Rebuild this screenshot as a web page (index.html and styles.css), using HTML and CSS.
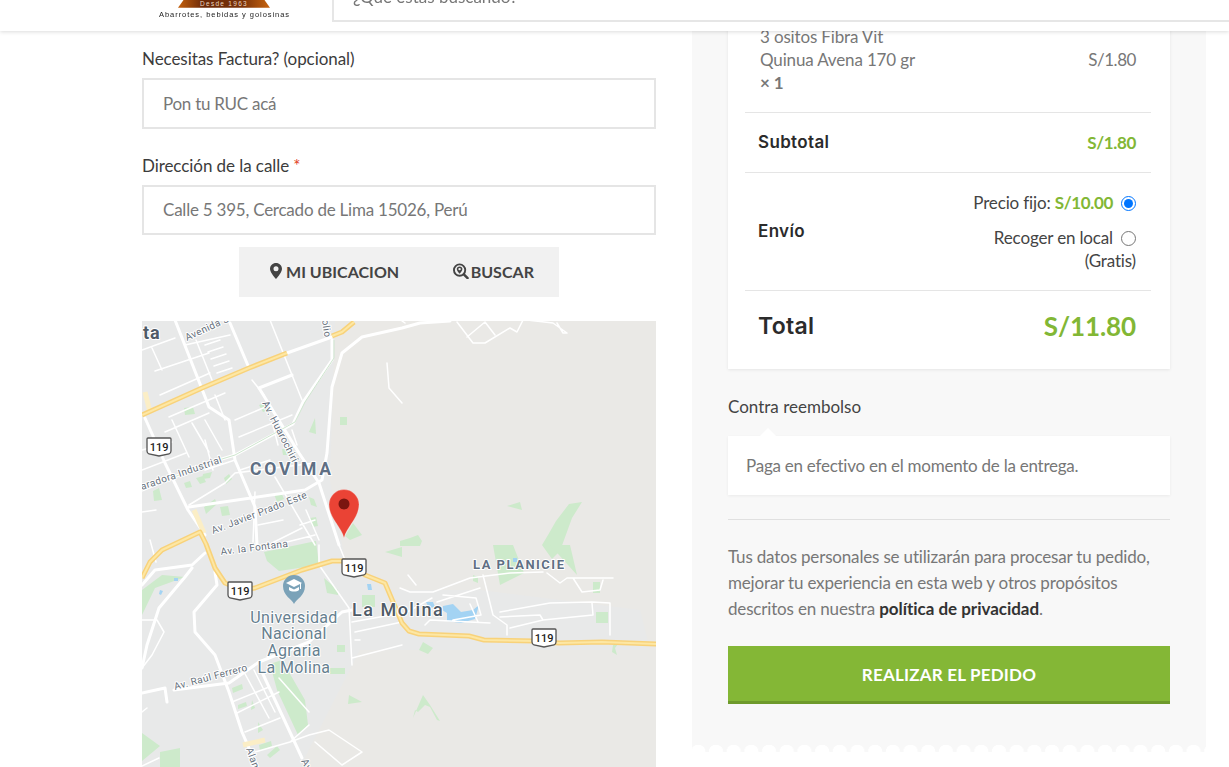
FILE: index.html
```html
<!DOCTYPE html>
<html lang="es">
<head>
    <meta charset="UTF-8">
    <title>Finalizar compra</title>
    <link rel="stylesheet" href="styles.css">
</head>
<body>
    <div id="header">
        <div class="logo">
            <div class="logo-badge">Desde 1963</div>
            <div class="logo-tag">Abarrotes, bebidas y golosinas</div>
        </div>
        <div class="search-box">¿Qué estás buscando?</div>
    </div>

    <div id="main">
        <div id="billing">
            <label class="field-label">Necesitas Factura? (opcional)</label>
            <input class="field" type="text" placeholder="Pon tu RUC acá">

            <label class="field-label second">Dirección de la calle <span class="req">*</span></label>
            <input class="field short" type="text" placeholder="Calle 5 395, Cercado de Lima 15026, Perú">

            <div class="map-actions">
                <div class="map-btn">
                    <svg class="icon" viewBox="0 0 12 16"><path fill-rule="evenodd" d="M6 0C2.7 0 0 2.6 0 5.8 0 8.9 3.6 13.500 6 16c2.400-2.500 6-7.100 6-10.200C12 2.600 9.300 0 6 0zm0 8.300A2.500 2.500 0 1 1 6 3.300a2.500 2.500 0 0 1 0 5z"/></svg>
                    MI UBICACION
                </div>
                <div class="map-btn tight">
                    <svg class="icon wide" viewBox="0 0 17 16"><circle cx="7" cy="7" r="6" fill="none" stroke="#444" stroke-width="2"/><path d="M11.500 11.500l4 4" stroke="#444" stroke-width="2.600" stroke-linecap="round"/><path fill-rule="evenodd" d="M7 3.200c-1.700 0-3 1.200-3 2.800 0 1.500 1.800 3.700 3 5 1.200-1.300 3-3.500 3-5 0-1.600-1.300-2.800-3-2.800zm0 4.100a1.300 1.300 0 1 1 0-2.600 1.300 1.300 0 0 1 0 2.600z"/></svg>
                    BUSCAR
                </div>
            </div>

            <svg class="map" viewBox="142 321 514 446">
                <rect class="land" x="142" y="321" width="514" height="446"/>
                <path class="urban" d="M142 321H335L330 480 345 560 385 590 480 590 640 610 650 650H400L360 650 300 767H142z"/>

                <g class="green">
                    <path d="M184 408l9-1 2 7-10 1zM259 405l8-3 3 8-7 2zM340 417h7v8h-7zM309 432l6-14 1 16zM282 449h7v6h-6zM203 474l9-2-2 6-8 1zM224 478l5-4 3 5-6 5zM184 483l6-2 2 6-6 1zM196 478l7-2 3 6-6 2zM153 491l6-3 3 12-8 1zM204 507l11-8 2 5-11 10zM220 507l8-1 2 9-8 1zM274 494l7-2 3 7-7 3zM310 518l6-1 2 9-6 1zM309 497l5 2 3 8-6-2z"/>
                    <path d="M345 536l8-13 9 12-12 5z"/>
                    <path d="M507 506l13-4 2 8zM542 545l6-10 8-14 13-17 13-2-10 16-12 33-8 8zM400 541l10-3 8-3 4 6-2 5h-20z"/>
                    <path d="M142 615l13-27 30-11-23-2-20 15zM264 552l52-11 3 24-40 6-12-10zM324 578l14 12v5l-11-2zM362 595h13v12h-13zM385 552l17-5v10zM270 664l12-4 23 40 3 25-10 10-21-45zM349 695l13 7-14 2zM337 645h8v7h-8zM328 668h17v6h-15zM142 733l18 13-18 15zM160 752l20-4v19h-20zM232 688l10-4 1 5-10 4zM238 705l8-3 1 4-9 3zM252 700l3 8-4 2zM258 722l5 8-5 3zM259 745l12-4 1 5-12 5zM267 755l10-9 3 4-10 8z"/>
                    <path d="M493 545l7 40 24-12-11-28zM550 545l27 30-7-30zM596 612h12v11h-12zM423 642l10 6-5 6-9-4zM593 582h7v11h-7zM613 645l5-1-3 4 2 7-5-3zM413 718l10-23 7 10 10 16-3-1-7-13-5-2-7 7-3-2zM473 575l5 2v6l-5-2z"/>
                </g>

                <g class="water">
                    <path d="M443 606l10-2 8 8 12-2 6-5-4 14-14 4-14-2 0-8-5-3zM426 602h7l2 5-6 1zM367 584l4 0 1 6h-4zM513 558l4 0v4h-4zM174 578h4v3h-4zM160 590l3 1-2 4-2-1z"/>
                </g>

                <g class="road thin">
                    <!-- north-west grid -->
                    <path d="M270 320l32 80M142 350l33-12M185 345l45-10M155 371l54-18M160 395l50-22M169 417l56-24M165 432l44-19M172 420l17 37M192 423l17 29M205 420l17 30M239 437l53-22M252 380l12 15M278 445l-5-20M297 445l-5-15M142 450l30-8M142 470l44-17M205 440l8 30M152 348l10 22M196 340l16 40M205 345l15-5M208 352l15-5M211 359l15-5M214 366l15-5M217 373l15-5M225 420l-10-25M235 420l35-15"/>
                    <path d="M189 505l36-22 10-10 80-10M205 470l30-10M240 470l30-10M275 477l27 46 13 22M255 492l-2 50M300 525l15-5M258 525l25-5M272 543l30-15M306 510l13 30M275 545l40-10M142 512l14-2M150 540l6 22M387 363l2 25 13 15M402 321l3 2"/>
                    <!-- top right -->
                    <path d="M457 322l16 21h12l25-15 7 4 6-12M467 337l18-15 10 13M527 320l26 3 14 10h-4l-6-10"/>
                    <!-- south-west, universidad -->
                    <path d="M142 620h15l7 12-12 23-10 13M232 702l37-15M237 713l42-21M245 732l35-14M255 752l35-10 19-17M244 672l25 46M254 670l21 42M279 678l30 34M309 735l20-5 33 22-20 13M315 742l27 23M290 742l19-7M142 712l5-4M142 766l17-8"/>
                    <path d="M319 545v20l30 43 3 57M352 658l50-13M352 622l50-9M355 632l47-10M339 545l6 15"/>
                    <!-- la molina, la planicie -->
                    <path d="M400 588l10 4h23l37-14 40-5 33-1M547 573l13 10 7-5h46M573 578l9 14 18-2 3-10M483 575l10 40 14 10v10M425 625l5-5 60 3M437 602l43-14M443 595l33 3 5 17-28 5M402 615l30-17M408 575l8 10M500 612l50-9 42-1 18 1v32M592 603l1 12-50 5-33 8M500 617l40-2 3 5M360 640l-5 0M478 622l-8-18"/>
                </g>

                <g class="road">
                    <path d="M175 320l34 87 20 13 6 40 20 47 2 38M230 323l19 45M259 388l40 65 20 30 20 62M259 388l33-13M287 353l45-16M189 507l116-17 17-10 5-27 5-66 10-34 20-16 40-9 18-5 30-2"/>
                    <path d="M332 340v20l-29 42-10 22-58 31-26 8-67 27"/>
                    <path d="M145 418l20 45 23 47 17 25"/>
                    <path d="M215 572l2 13-23 27 1 20 20 23 14 37 13 40 13 30"/>
                    <path d="M142 585l13-15 37-5 13-12M192 568l-7 9-26 31-12 37-5 23"/>
                    <path d="M167 702l-2-14-23 5M174 690l55-7 30-21 50-20 33-30 10-2"/>
                    <path d="M262 672l20 43 20 43"/>
                </g>
                <path class="road-trim" d="M334 340v18l-29 44-10 20-60 33-26 8-67 27"/>

                <g class="pale">
                    <path d="M145 392l5 20M194 510l10 23M243 745l22-5"/>
                </g>
                <g class="highway">
                    <path d="M142 415l60-27 47-20 38-15M332 336l10-4 12-10"/>
                    <path d="M142 578l8-16 12-12 38-18 6 12 9 24 10 15 17 7 13-2 47-18 30-9h13l20 14 20 8 17 40 7 8 10 3 50 2 15 4 51 1 24 2 43-1 56 2"/>
                </g>
                <g class="highway inner">
                    <path d="M142 415l60-27 47-20 38-15M332 336l10-4 12-10"/>
                    <path d="M142 578l8-16 12-12 38-18 6 12 9 24 10 15 17 7 13-2 47-18 30-9h13l20 14 20 8 17 40 7 8 10 3 50 2 15 4 51 1 24 2 43-1 56 2"/>
                </g>

                <g class="shield" transform="translate(159 447)"><path d="M-12-8q0-1 1-1h22q1 0 1 1v12q0 2-2 3l-10 2-10-2q-2-1-2-3z"/><text y="4">119</text></g>
                <g class="shield" transform="translate(354 568)"><path d="M-12-8q0-1 1-1h22q1 0 1 1v12q0 2-2 3l-10 2-10-2q-2-1-2-3z"/><text y="4">119</text></g>
                <g class="shield" transform="translate(240 591)"><path d="M-12-8q0-1 1-1h22q1 0 1 1v12q0 2-2 3l-10 2-10-2q-2-1-2-3z"/><text y="4">119</text></g>
                <g class="shield" transform="translate(544 638)"><path d="M-12-8q0-1 1-1h22q1 0 1 1v12q0 2-2 3l-10 2-10-2q-2-1-2-3z"/><text y="4">119</text></g>

                <text class="place big" x="143" y="339">ta</text>
                <text class="place area" x="250" y="475">COVIMA</text>
                <text class="place area small" x="473" y="569">LA PLANICIE</text>
                <text class="place town" x="352" y="616">La Molina</text>
                <g class="place poi">
                    <text x="294" y="623">Universidad</text>
                    <text x="294" y="639">Nacional</text>
                    <text x="294" y="656">Agraria</text>
                    <text x="294" y="673">La Molina</text>
                </g>
                <g class="street">
                    <text transform="translate(187 341) rotate(-25)">Avenida S</text>
                    <text transform="translate(322 320) rotate(82)">olio</text>
                    <text transform="translate(262 403) rotate(63)">Av. Huarochirí</text>
                    <text transform="translate(142 490) rotate(-19)">aradora Industrial</text>
                    <text transform="translate(213 534) rotate(-21)">Av. Javier Prado Este</text>
                    <text transform="translate(221 555) rotate(-7)">Av. la Fontana</text>
                    <text transform="translate(175 690) rotate(-15)">Av. Raúl Ferrero</text>
                    <text transform="translate(246 749) rotate(70)">Alamo</text>
                    <text transform="translate(301 761) rotate(62)">Av</text>
                </g>

                <path class="poi-pin" d="M294 604c-2-5-11-8-11-18a11 11 0 0 1 22 0c0 10-9 13-11 18z"/>
                <path class="poi-cap" d="M294 579l-8 4 8 4 6-3v5h1v-5.500l1-.500zM289 587v3c2 2 8 2 10 0v-3l-5 2.500z"/>

                <path class="pin" d="M344 538c-2.500-11-15-20-15-33.500a15 15 0 0 1 30 0c0 13.500-12.500 22.500-15 33.500z"/>
                <circle class="pin-dot" cx="344" cy="504" r="5.500"/>
            </svg>
        </div>

        <div id="order">
            <div class="order-card">
                <div class="row item">
                    <div class="item-name">3 ositos Fibra Vit<br>Quinua Avena 170 gr<br><strong>× 1</strong></div>
                    <div class="item-price">S/1.80</div>
                </div>
                <div class="row subtotal">
                    <div class="row-title">Subtotal</div>
                    <div class="amount">S/1.80</div>
                </div>
                <div class="row shipping">
                    <div class="row-title">Envío</div>
                    <div class="ship-options">
                        <div class="ship-option">
                            <span>Precio fijo: <span class="amount">S/10.00</span></span>
                            <input type="radio" name="ship" checked>
                        </div>
                        <div class="ship-option">
                            <span>Recoger en local</span>
                            <input type="radio" name="ship">
                        </div>
                        <div class="ship-note">(Gratis)</div>
                    </div>
                </div>
                <div class="row total">
                    <div class="row-title">Total</div>
                    <div class="amount">S/11.80</div>
                </div>
            </div>

            <div class="pay-title">Contra reembolso</div>
            <div class="pay-box">Paga en efectivo en el momento de la entrega.</div>

            <p class="privacy">Tus datos personales se utilizarán para procesar tu pedido, mejorar tu experiencia en esta web y otros propósitos descritos en nuestra <strong>política de privacidad</strong>.</p>

            <button class="place-order">REALIZAR EL PEDIDO</button>
            <div class="scallop"></div>
        </div>
    </div>
</body>
</html>
```

FILE: styles.css
```css
html, body {
    margin: 0;
    padding: 0;
    height: 767px;
    overflow: hidden;
    background-color: #fff;
    font-family: Lato, sans-serif;
    font-size: 17px;
    color: #3c3c3c;
}

/* header is sticky in the real page, so content runs under it */
#header {
    position: fixed;
    top: 0;
    left: 0;
    right: 0;
    height: 31px;
    overflow: hidden;
    display: flex;
    background-color: #fff;
    box-shadow: 0 1px 4px rgba(0, 0, 0, 0.14);
    z-index: 10;
}
.logo {
    width: 174px;
    margin-left: 158px;
    display: flex;
    flex-direction: column;
}
.logo-badge {
    width: 92px;
    height: 9px;
    margin-left: 20px;
    background: linear-gradient(90deg, #c4600c, #6a2808 28%, #7a3208 70%, #c8640e);
    clip-path: polygon(6% 0, 94% 0, 100% 85%, 0 85%);
    color: #e9d7c2;
    font-family: "Liberation Sans", sans-serif;
    font-size: 6.500px;
    letter-spacing: 1.3px;
    line-height: 7px;
    text-align: center;
}
.logo-tag {
    margin-top: 1px;
    margin-left: 1px;
    font-family: "Liberation Sans", sans-serif;
    font-size: 7.500px;
    line-height: 10px;
    letter-spacing: 0.95px;
    color: #222;
    white-space: nowrap;
}
.search-box {
    flex: 1;
    height: 40px;
    margin-top: -18px;
    box-sizing: border-box;
    padding-left: 19px;
    border-left: 2px solid #e6e6e6;
    border-bottom: 2px solid #e6e6e6;
    line-height: 29px;
    color: #777;
}

#main {
    display: flex;
    gap: 36px;
    padding-left: 142px;
}

#billing {
    width: 514px;
    padding-top: 46px;
}
.field-label {
    display: block;
    height: 26px;
    line-height: 26px;
    letter-spacing: -0.07px;
}
.field-label.second {
    margin-top: 24px;
    height: 26px;
}
.req {
    color: #e2401c;
}
.field {
    display: block;
    width: 100%;
    height: 51px;
    box-sizing: border-box;
    margin-top: 6px;
    padding: 0 19px;
    border: 2px solid #e5e5e5;
    background-color: #fff;
    font-family: Lato, sans-serif;
    font-size: 17px;
    letter-spacing: -0.27px;
}
.field.short {
    height: 50px;
    padding-bottom: 1px;
    letter-spacing: -0.23px;
}
.field::placeholder {
    color: #777;
    opacity: 1;
}
.map-actions {
    display: flex;
    justify-content: space-between;
    width: 320px;
    height: 50px;
    box-sizing: border-box;
    margin: 12px auto 24px;
    padding: 0 25px 2px 31px;
    background-color: #f1f1f1;
}
.map-btn {
    display: flex;
    align-items: center;
    gap: 4px;
    font-size: 16px;
    font-weight: 700;
    letter-spacing: 0.03px;
    color: #444;
}
.map-btn.tight {
    gap: 2px;
}
.icon {
    width: 12px;
    height: 16px;
    fill: #444;
}
.icon.wide {
    width: 16px;
}

.map {
    display: block;
    width: 514px;
    height: 446px;
}
.land { fill: #eae9e6; }
.urban { fill: #e8e9e9; }
.green path { fill: #cdeacb; }
.water path { fill: #a3d3f3; }
.road path {
    fill: none;
    stroke: #fff;
    stroke-width: 3;
    stroke-linejoin: round;
    stroke-linecap: round;
}
.road.thin path { stroke-width: 1.500; }
.road-trim {
    fill: none;
    stroke: #cfe6cf;
    stroke-width: 1;
}
.pale path {
    fill: none;
    stroke: #fbeec6;
    stroke-width: 5;
}
.highway path {
    fill: none;
    stroke: #f8d27a;
    stroke-width: 5;
    stroke-linejoin: round;
}
.highway.inner path {
    stroke: #fde7a4;
    stroke-width: 2;
}
.shield path {
    fill: #fff;
    stroke: #555;
    stroke-width: 1.300;
}
.shield text {
    font-family: Roboto, sans-serif;
    font-size: 11px;
    font-weight: 500;
    fill: #222;
    text-anchor: middle;
}
.place, .street text {
    font-family: Roboto, sans-serif;
    paint-order: stroke;
    stroke: #fff;
    stroke-width: 2px;
    stroke-linejoin: round;
}
.place.big {
    font-size: 18px;
    font-weight: 700;
    letter-spacing: 1px;
    fill: #4f5b67;
}
.place.area {
    font-size: 17.500px;
    font-weight: 700;
    letter-spacing: 2.800px;
    fill: #5f6f84;
}
.place.area.small {
    font-size: 13px;
    letter-spacing: 1.500px;
}
.place.town {
    font-size: 18px;
    font-weight: 500;
    letter-spacing: 1.500px;
    fill: #4f5b67;
}
.place.poi text {
    font-size: 16px;
    letter-spacing: 0.350px;
    fill: #66808f;
    text-anchor: middle;
}
.street text {
    font-size: 10px;
    letter-spacing: 0.400px;
    fill: #66707c;
}
.poi-pin { fill: #7ba2b8; }
.poi-cap { fill: #fff; }
.pin { fill: #ea4335; stroke: #fff; stroke-opacity: 0.5; stroke-width: 0.500; }
.pin-dot { fill: #7b1610; }

#order {
    width: 514px;
    box-sizing: border-box;
    padding: 0 36px;
    background-color: #f8f8f8;
    position: relative;
    height: 752px;
}
.order-card {
    height: 369px;
    box-sizing: border-box;
    padding: 0 19px 0 17px;
    background-color: #fff;
    box-shadow: 0 1px 3px rgba(0, 0, 0, 0.08);
}
.row {
    display: flex;
    justify-content: space-between;
    align-items: center;
    box-sizing: border-box;
    padding: 0 15px 0 13px;
    border-bottom: 1px solid #e5e5e5;
    letter-spacing: -0.15px;
}
.row-title {
    font-family: Inter, sans-serif;
    font-weight: 600;
    font-size: 17px;
    letter-spacing: 0.35px;
    color: #2b2b2b;
}
.amount {
    color: #82b735;
    font-weight: 700;
    letter-spacing: -0.35px;
}
.item {
    height: 113px;
    padding-top: 25px;
    padding-bottom: 18px;
    padding-left: 15px;
    color: #777;
    line-height: 23px;
}
.item-price {
    letter-spacing: -0.45px;
}
.item-name strong {
    font-size: 17px;
}
.subtotal {
    height: 60px;
    padding-bottom: 2px;
}
.subtotal .amount {
    padding-top: 2px;
}
.shipping {
    height: 118px;
}
.shipping .row-title {
    padding-bottom: 2px;
}
.total {
    height: 78px;
    padding-bottom: 8px;
    border-bottom: none;
}
.total .row-title {
    font-size: 23px;
    letter-spacing: 0.3px;
}
.total .amount {
    font-size: 26px;
    letter-spacing: -0.1px;
}
.ship-options {
    text-align: right;
    color: #444;
}
.ship-option {
    display: flex;
    justify-content: flex-end;
    align-items: center;
    gap: 8px;
    height: 23px;
    margin-bottom: 12px;
}
.ship-option input {
    width: 15px;
    height: 15px;
    margin: 1px 0 0;
}
.ship-note {
    margin-top: -12px;
    line-height: 23px;
}

.pay-title {
    margin-top: 25px;
    line-height: 26px;
    color: #444;
}
.pay-box {
    position: relative;
    height: 59px;
    margin-top: 16px;
    padding-left: 18px;
    line-height: 60px;
    letter-spacing: -0.25px;
    background-color: #fff;
    color: #777;
    box-shadow: 0 1px 3px rgba(0, 0, 0, 0.06);
}
/* small notch pointing at the payment title */
.pay-box::before {
    content: "";
    position: absolute;
    left: 32px;
    top: -8px;
    border-left: 8px solid transparent;
    border-right: 8px solid transparent;
    border-bottom: 8px solid #fff;
}
.privacy {
    margin: 24px 0 0;
    padding-top: 24px;
    border-top: 1px solid #e0e0e0;
    line-height: 26px;
    letter-spacing: -0.17px;
    color: #777;
}
.privacy strong {
    color: #333;
    letter-spacing: -0.03px;
}
.place-order {
    display: block;
    width: 100%;
    height: 58px;
    margin-top: 24px;
    padding-top: 3px;
    border: none;
    border-bottom: 3px solid #6e9a2c;
    background-color: #84b736;
    color: #fff;
    font-family: Lato, sans-serif;
    font-size: 17px;
    font-weight: 700;
    letter-spacing: 0.2px;
}
.scallop {
    position: absolute;
    left: 0;
    right: 0;
    bottom: 0;
    height: 8px;
    background-image: radial-gradient(circle at 8.850px 8px, #fff 7px, transparent 7.500px);
    background-size: 17.700px 8px;
    background-position: -2.600px 0;
    background-repeat: repeat-x;
}
```
